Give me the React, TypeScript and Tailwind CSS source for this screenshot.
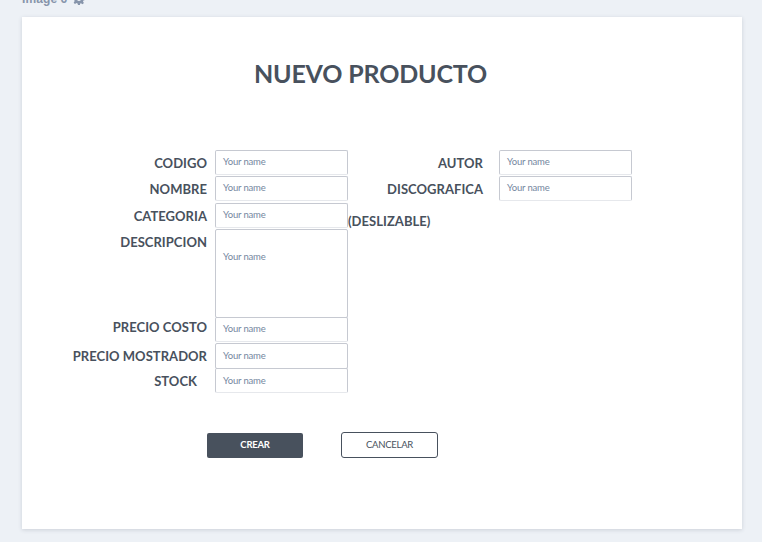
import React from "react";

type FieldProps = {
  label: string;
  row: string;
  box?: string;
  labelClass?: string;
  faintBottom?: boolean;
};

function Field({ label, row, box = "h-[25px] pb-px", labelClass = "pt-[3px] mr-2", faintBottom = true }: FieldProps) {
  return (
    <div className={`flex items-start justify-end ${row}`}>
      <label
        className={`whitespace-nowrap text-[13px] leading-5 font-bold tracking-[0.04px] text-[#48515d] ${labelClass}`}
      >
        {label}
      </label>
      <div
        className={`flex w-[133px] shrink-0 items-center rounded-[2px] border border-[#c6c9d1] pl-[7px] ${box} ${
          faintBottom ? "border-b-[#e6e8ec]" : ""
        }`}
      >
        <span className="text-[9.5px] leading-3 tracking-[-0.17px] text-[#7587a0]">Your name</span>
      </div>
    </div>
  );
}

function Gear() {
  return (
    <svg className="h-[12px] w-[12px]" viewBox="0 0 24 24" fill="#8795ab">
      <path
        fillRule="evenodd"
        d="M10 0h4l.7 3.600 2 .9L20 2.500l2.600 2.800-2 3 .8 2 2.600.7v3l-3.200.8-.8 2 1.800 3.200-2.700 2.500-3.200-2-1.900.8L14 24h-4l-.9-3.200-2-.8-3.200 2L1.300 19.300l2-3.200-.8-2L0 13.500v-3l2.600-.8.8-2-2-2.900L4 2.300l3.200 2.200 2-.9zM12 8a4 4 0 1 0 0 8 4 4 0 0 0 0-8z"
      />
    </svg>
  );
}

export default function App() {
  return (
    <div className="h-[542px] w-[762px] overflow-hidden bg-[#edf1f6] font-['Lato','Liberation_Sans',sans-serif]">
      <div className="flex h-[17px] items-start pl-[22px]">
        <div className="-mt-[9px] flex h-4 items-center gap-[6px]">
          <span className="font-['Liberation_Sans',sans-serif] text-[12px] leading-4 font-bold tracking-[0.1px] text-[#8795ab]">
            Image 6
          </span>
          <Gear />
        </div>
      </div>
      <main className="ml-[22px] flex h-[512px] w-[720px] flex-col bg-white shadow-[0_1px_4px_rgba(70,80,100,0.2)]">
        <h1 className="mt-[40px] w-[697px] text-center text-[25px] leading-8 font-bold tracking-[-0.16px] text-[#48515d]">
          NUEVO PRODUCTO
        </h1>
        <div className="mt-[61px] flex items-start">
          <div className="flex w-[326px] flex-col">
            <Field label="CODIGO" row="h-[26px]" />
            <Field label="NOMBRE" row="h-[27px]" />
            <Field label="CATEGORIA" row="h-[26px]" />
            <Field label="DESCRIPCION" row="h-[88px]" box="h-[89px] !items-start pt-[21px]" faintBottom={false} />
            <Field label="PRECIO COSTO" row="h-[26px]" labelClass="pt-0 mr-2" />
            <Field label="PRECIO MOSTRADOR" row="h-[25px]" box="h-[26px]" faintBottom={false} />
            <Field label="STOCK" row="h-[25px]" box="h-[25px] pt-px" labelClass="pt-[3px] mr-[18px]" />
          </div>
          <div className="flex w-[284px] flex-col">
            <Field label="AUTOR" row="h-[26px]" labelClass="pt-[3px] mr-[16px]" />
            <Field label="DISCOGRAFICA" row="h-[25px]" labelClass="pt-[3px] mr-[16px]" />
            <p className="mt-[10px] text-[13px] leading-5 font-bold tracking-[0.04px] text-[#48515d]">(DESLIZABLE)</p>
          </div>
        </div>
        <div className="mt-[39px] ml-[185px] flex items-start gap-[38px]">
          <button className="mt-px h-[25px] w-[96px] rounded-[2px] bg-[#48515d] text-[9.5px] font-bold tracking-[-0.25px] text-white">
            CREAR
          </button>
          <button className="h-[26px] w-[97px] rounded-[3px] border border-[#48515d] bg-white text-[9.5px] tracking-[-0.25px] text-[#48515d]">
            CANCELAR
          </button>
        </div>
      </main>
    </div>
  );
}
